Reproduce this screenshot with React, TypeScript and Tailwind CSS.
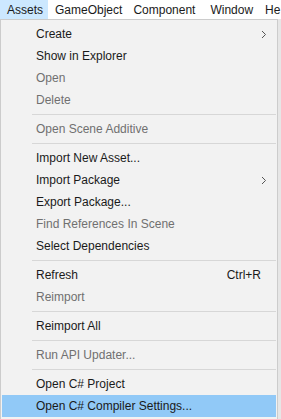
import React from "react";

type Item =
  | { sep: true }
  | { label: string; disabled?: boolean; sub?: boolean; shortcut?: string; active?: boolean; sep?: false };

const items: Item[] = [
  { label: "Create", sub: true },
  { label: "Show in Explorer" },
  { label: "Open", disabled: true },
  { label: "Delete", disabled: true },
  { sep: true },
  { label: "Open Scene Additive", disabled: true },
  { sep: true },
  { label: "Import New Asset..." },
  { label: "Import Package", sub: true },
  { label: "Export Package..." },
  { label: "Find References In Scene", disabled: true },
  { label: "Select Dependencies" },
  { sep: true },
  { label: "Refresh", shortcut: "Ctrl+R" },
  { label: "Reimport", disabled: true },
  { sep: true },
  { label: "Reimport All" },
  { sep: true },
  { label: "Run API Updater...", disabled: true },
  { sep: true },
  { label: "Open C# Project" },
  { label: "Open C# Compiler Settings...", active: true },
];

export default function App() {
  return (
    <div className="w-[281px] h-[419px] overflow-hidden bg-[#f0f0f0] text-[12px] text-[#1a1a1a] font-['Liberation_Sans',sans-serif]">
      {/* menu bar */}
      <div className="flex h-[19px] items-center whitespace-nowrap bg-white">
        <div className="flex h-full items-center bg-[#cce8ff] pl-[7px] pr-[5px]">Assets</div>
        <div className="pl-[7px] pr-[5px]">GameObject</div>
        <div className="pl-[6px] pr-[5px]">Component</div>
        <div className="pl-[10px] pr-[12px]">Window</div>
        <div>He</div>
      </div>

      {/* dropdown */}
      <div className="flex">
        <div className="w-[278px] border border-[#cccccc] bg-[#f2f2f2] pt-[3px] pb-[2px] pl-[1px] pr-[1px]">
          {items.map((it, i) =>
            it.sep ? (
              <div key={i} className="flex h-[7px] items-center pl-[30px]">
                <div className="h-px w-full bg-[#d7d7d7]" />
              </div>
            ) : (
              <div
                key={i}
                className={`flex h-[22px] items-center pl-[34px] pr-[8px] ${
                  it.active ? "bg-[#91c9f7]" : ""
                } ${it.disabled ? "text-[#707070]" : ""}`}
              >
                <span className="flex-1">{it.label}</span>
                {it.shortcut && <span className="pr-[7px]">{it.shortcut}</span>}
                {it.sub && (
                  <svg width="6" height="9" viewBox="0 0 6 9" className="mr-[1px]">
                    <path d="M1 1l3.5 3.5L1 8" fill="none" stroke="#555" strokeWidth="1" />
                  </svg>
                )}
              </div>
            )
          )}
        </div>
        <div className="flex-1 bg-[#e6e6e6]" />
      </div>
    </div>
  );
}
